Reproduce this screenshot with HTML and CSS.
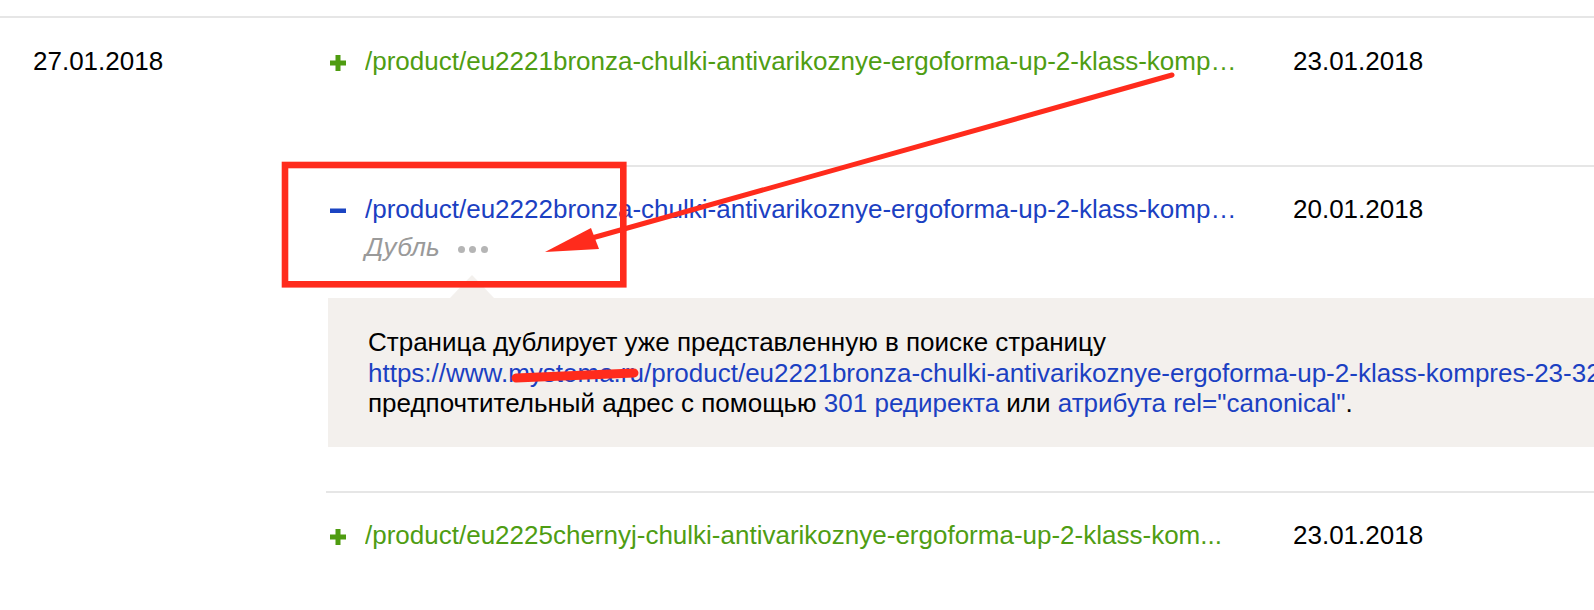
FILE: index.html
```html
<!DOCTYPE html>
<html lang="ru">
<head>
<meta charset="utf-8">
<title>История страниц</title>
<link rel="stylesheet" href="styles.css">
</head>
<body>
<div class="page">
  <div class="group">
    <div class="group__date">27.01.2018</div>
    <div class="entries">
      <div class="entry entry--added">
        <span class="entry__icon"><svg width="16" height="16" viewBox="0 0 16 16"><rect x="0" y="5.5" width="16" height="5" fill="#4e9c10"/><rect x="5.5" y="0" width="5" height="16" fill="#4e9c10"/></svg></span>
        <div class="entry__body">
          <a class="entry__url">/product/eu2221bronza-chulki-antivarikoznye-ergoforma-up-2-klass-komp…</a>
        </div>
        <div class="entry__date">23.01.2018</div>
      </div>
      <div class="entry entry--removed">
        <span class="entry__icon"><svg width="16" height="16" viewBox="0 0 16 16"><rect x="0" y="5.5" width="16" height="4.5" fill="#1b44c2"/></svg></span>
        <div class="entry__body">
          <a class="entry__url">/product/eu2222bronza-chulki-antivarikoznye-ergoforma-up-2-klass-komp…</a>
          <div class="entry__status">Дубль <span class="dots"><i></i><i></i><i></i></span></div>
        </div>
        <div class="entry__date">20.01.2018</div>
        <div class="hint">
          <div class="hint__line">Страница дублирует уже представленную в поиске страницу</div>
          <div class="hint__line hint__line--clip"><a class="hint__link">https://www.mystoma.ru/product/eu2221bronza-chulki-antivarikoznye-ergoforma-up-2-klass-kompres-23-32-mm-rt-s-otkrytym-noskom</a></div>
          <div class="hint__line">предпочтительный адрес с помощью <a class="hint__link">301 редиректа</a> или <a class="hint__link">атрибута rel="canonical"</a>.</div>
        </div>
      </div>
      <div class="entry entry--added">
        <span class="entry__icon"><svg width="16" height="16" viewBox="0 0 16 16"><rect x="0" y="5.5" width="16" height="5" fill="#4e9c10"/><rect x="5.5" y="0" width="5" height="16" fill="#4e9c10"/></svg></span>
        <div class="entry__body">
          <a class="entry__url">/product/eu2225chernyj-chulki-antivarikoznye-ergoforma-up-2-klass-kom...</a>
        </div>
        <div class="entry__date">23.01.2018</div>
      </div>
    </div>
  </div>
  <svg class="annotations" width="1594" height="610" viewBox="0 0 1594 610">
    <rect x="285" y="165" width="338.3" height="119.3" fill="none" stroke="#ff2b1c" stroke-width="6.6"/>
    <line x1="1172" y1="75" x2="592" y2="238" stroke="#ff2b1c" stroke-width="5" stroke-linecap="round"/>
    <polygon points="545,252 591,228 599,249" fill="#ff2b1c"/>
    <path d="M516 378 L634 373" stroke="#ff2b1c" stroke-width="9" stroke-linecap="round"/>
  </svg>
</div>
</body>
</html>
```

FILE: styles.css
```css
html, body {
  margin: 0;
  padding: 0;
  background: #ffffff;
}

body {
  font-family: "Liberation Sans", Arial, Helvetica, sans-serif;
  font-size: 26px;
  line-height: 30px;
  color: #000;
  overflow: hidden;
  width: 1594px;
  height: 610px;
}

.page {
  position: relative;
  width: 1594px;
  height: 610px;
  overflow: hidden;
}

.group {
  margin-top: 16px;
  border-top: 2px solid #e6e6e6;
  display: grid;
  grid-template-columns: 326px 1fr;
}

.group__date {
  padding: 28px 0 0 33px;
}

.entries {
  display: flex;
  flex-direction: column;
  min-width: 0;
}

.entry {
  display: grid;
  grid-template-columns: 39px 928px 1fr;
  align-content: start;
  box-sizing: border-box;
  min-height: 147px;
  padding-top: 27px;
}

.entry:first-child {
  padding-top: 28px;
}

.entry + .entry {
  border-top: 2px solid #e6e6e6;
}

.entry__icon {
  display: flex;
  align-items: center;
  height: 30px;
  padding-left: 4px;
  padding-top: 3px;
  box-sizing: border-box;
}

.entry__icon svg {
  display: block;
}

.entry__body {
  min-width: 0;
}

.entry__url {
  display: block;
  white-space: nowrap;
  overflow: hidden;
}

.entry--added .entry__url {
  color: #4f9d13;
}

.entry--removed .entry__url {
  color: #1b40c2;
}

.entry__status {
  margin-top: 8px;
  color: #9a9a9a;
  font-style: italic;
  display: flex;
  align-items: center;
}

.dots {
  display: inline-flex;
  gap: 4.5px;
  margin-left: 18px;
  padding-top: 4px;
}

.dots i {
  display: block;
  width: 7px;
  height: 7px;
  border-radius: 50%;
  background: #b5b5b5;
}

.entry__date {
  white-space: nowrap;
}

.entry--removed {
  padding-bottom: 44px;
}

.hint {
  grid-column: 1 / -1;
  position: relative;
  margin: 36px 0 0 2px;
  background: #f3f0ed;
  padding: 29px 0 0 40px;
  line-height: 30.5px;
  box-sizing: border-box;
  height: 149px;
  overflow: hidden;
}

.hint::before {
  content: "";
  position: absolute;
  left: 122px;
  top: -23px;
  border-left: 22.5px solid transparent;
  border-right: 22.5px solid transparent;
  border-bottom: 23px solid #f3f0ed;
}

.hint {
  overflow: visible;
}

.hint__line {
  white-space: nowrap;
}

.hint__line--clip {
  overflow: hidden;
}

.hint__link {
  color: #1b40c2;
}

.annotations {
  position: absolute;
  left: 0;
  top: 0;
  pointer-events: none;
}
```
